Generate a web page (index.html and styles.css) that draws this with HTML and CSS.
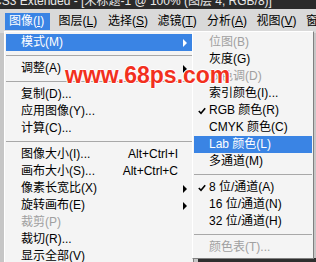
FILE: index.html
```html
<!DOCTYPE html>
<html lang="zh-CN">
<head>
    <meta charset="UTF-8">
    <title>Photoshop 图像菜单</title>
    <link rel="stylesheet" href="styles.css">
</head>
<body>
    <div class="titlebar">
        <span class="title-text">CS3 Extended - [未标题-1 @ 100% (图层 4, RGB/8)]</span>
    </div>
    <div class="menubar">
        <span class="menubar-item active">图像(<u>I</u>)</span>
        <span class="menubar-item">图层(<u>L</u>)</span>
        <span class="menubar-item">选择(<u>S</u>)</span>
        <span class="menubar-item">滤镜(<u>T</u>)</span>
        <span class="menubar-item">分析(<u>A</u>)</span>
        <span class="menubar-item">视图(<u>V</u>)</span>
        <span class="menubar-item">窗口(<u>W</u>)</span>
    </div>
    <div class="workspace">
        <div class="canvas"></div>

        <!-- 图像 menu -->
        <ul class="menu main-menu">
            <li class="item active"><span class="mark"></span><span class="label">模式(M)</span><span class="sub"><i class="arrow"></i></span></li>
            <li class="sep"></li>
            <li class="item"><span class="mark"></span><span class="label">调整(A)</span><span class="sub"><i class="arrow"></i></span></li>
            <li class="sep"></li>
            <li class="item"><span class="mark"></span><span class="label">复制(D)...</span><span class="sub"></span></li>
            <li class="item"><span class="mark"></span><span class="label">应用图像(Y)...</span><span class="sub"></span></li>
            <li class="item"><span class="mark"></span><span class="label">计算(C)...</span><span class="sub"></span></li>
            <li class="sep"></li>
            <li class="item"><span class="mark"></span><span class="label">图像大小(I)...</span><span class="shortcut">Alt+Ctrl+I</span><span class="sub"></span></li>
            <li class="item"><span class="mark"></span><span class="label">画布大小(S)...</span><span class="shortcut">Alt+Ctrl+C</span><span class="sub"></span></li>
            <li class="item"><span class="mark"></span><span class="label">像素长宽比(X)</span><span class="sub"><i class="arrow"></i></span></li>
            <li class="item"><span class="mark"></span><span class="label">旋转画布(E)</span><span class="sub"><i class="arrow"></i></span></li>
            <li class="item disabled"><span class="mark"></span><span class="label">裁剪(P)</span><span class="sub"></span></li>
            <li class="item"><span class="mark"></span><span class="label">裁切(R)...</span><span class="sub"></span></li>
            <li class="item"><span class="mark"></span><span class="label">显示全部(V)</span><span class="sub"></span></li>
        </ul>

        <!-- 模式 submenu -->
        <ul class="menu sub-menu">
            <li class="item disabled"><span class="mark"></span><span class="label">位图(B)</span></li>
            <li class="item"><span class="mark"></span><span class="label">灰度(G)</span></li>
            <li class="item disabled"><span class="mark"></span><span class="label">双色调(D)</span></li>
            <li class="item"><span class="mark"></span><span class="label">索引颜色(I)...</span></li>
            <li class="item"><span class="mark"><svg class="check" width="8" height="8" viewBox="0 0 8 8"><polyline points="0.8,4 3,6.3 7.2,1.2"/></svg></span><span class="label">RGB 颜色(R)</span></li>
            <li class="item"><span class="mark"></span><span class="label">CMYK 颜色(C)</span></li>
            <li class="item active"><span class="mark"></span><span class="label">Lab 颜色(L)</span></li>
            <li class="item"><span class="mark"></span><span class="label">多通道(M)</span></li>
            <li class="sep"></li>
            <li class="item"><span class="mark"><svg class="check" width="8" height="8" viewBox="0 0 8 8"><polyline points="0.8,4 3,6.3 7.2,1.2"/></svg></span><span class="label">8 位/通道(A)</span></li>
            <li class="item"><span class="mark"></span><span class="label">16 位/通道(N)</span></li>
            <li class="item"><span class="mark"></span><span class="label">32 位/通道(H)</span></li>
            <li class="sep"></li>
            <li class="item disabled"><span class="mark"></span><span class="label">颜色表(T)...</span></li>
        </ul>

        <div class="watermark">www.68ps.com</div>
    </div>
</body>
</html>
```

FILE: styles.css
```css
body {
    margin: 0;
    width: 316px;
    height: 262px;
    overflow: hidden;
    font-family: "Liberation Sans", "Noto Sans CJK SC", sans-serif;
    font-size: 12px;
    background-color: #c6c6c6;
    color: #000;
}
.titlebar {
    height: 9px;
    background-color: #2b2b2b;
    color: #e8e8e8;
    overflow: hidden;
    white-space: nowrap;
    line-height: 12px;
}
.title-text {
    display: block;
    margin-top: -5px;
    margin-left: -7px;
}
.menubar {
    height: 24px;
    box-sizing: border-box;
    padding: 4px 0 0 5px;
    display: flex;
    gap: 4.5px;
    background-color: #d9d9d9;
    white-space: nowrap;
    overflow: hidden;
}
.menubar-item {
    flex: none;
    width: 45px;
    height: 17px;
    line-height: 17px;
    padding-left: 4px;
    box-sizing: border-box;
}
.menubar-item.active {
    background-color: #3a84e4;
    color: #fff;
}
.workspace {
    position: relative;
    height: 229px;
    display: flex;
    justify-content: flex-end;
    align-items: flex-end;
}
.canvas {
    width: 118px;
    height: 4px;
    background-color: #2e2e2e;
}
.menu {
    position: absolute;
    top: -2px;
    margin: 0;
    padding: 2px 1px;
    list-style: none;
    box-sizing: border-box;
    background-color: #f4f4f4;
    border: 1px solid;
    border-color: #fff #808080 #808080 #fff;
}
.main-menu {
    left: 4px;
    width: 190px;
}
.sub-menu {
    left: 192px;
    width: 122px;
}
.item {
    display: flex;
    align-items: center;
    height: 17px;
    line-height: 17px;
    white-space: nowrap;
}
.item.active {
    background-color: #3a84e4;
    color: #fff;
}
.item.disabled {
    color: #a0a0a0;
}
.mark {
    flex: none;
    width: 15px;
    display: flex;
    justify-content: center;
    align-items: center;
}
.check polyline {
    fill: none;
    stroke: #000;
    stroke-width: 1.6;
}
.label {
    flex: 1;
}
.shortcut {
    flex: none;
}
.sub {
    flex: none;
    width: 14px;
    display: flex;
    align-items: center;
    padding-left: 5px;
    box-sizing: border-box;
}
.arrow {
    width: 0;
    height: 0;
    border-left: 4px solid #000;
    border-top: 4px solid transparent;
    border-bottom: 4px solid transparent;
}
.item.active .arrow {
    border-left-color: #fff;
}
.sep {
    height: 9px;
    display: flex;
    align-items: center;
}
.sep::before {
    content: "";
    flex: 1;
    height: 1px;
    background-color: #a8a8a8;
}
.watermark {
    position: absolute;
    left: 65px;
    top: 31px;
    font-family: "Liberation Sans", sans-serif;
    font-weight: bold;
    font-size: 23px;
    line-height: 23px;
    color: #f2301e;
    text-shadow: 1px 0 0 #fff, -1px 0 0 #fff, 0 1px 0 #fff, 0 -1px 0 #fff;
    pointer-events: none;
}
```
